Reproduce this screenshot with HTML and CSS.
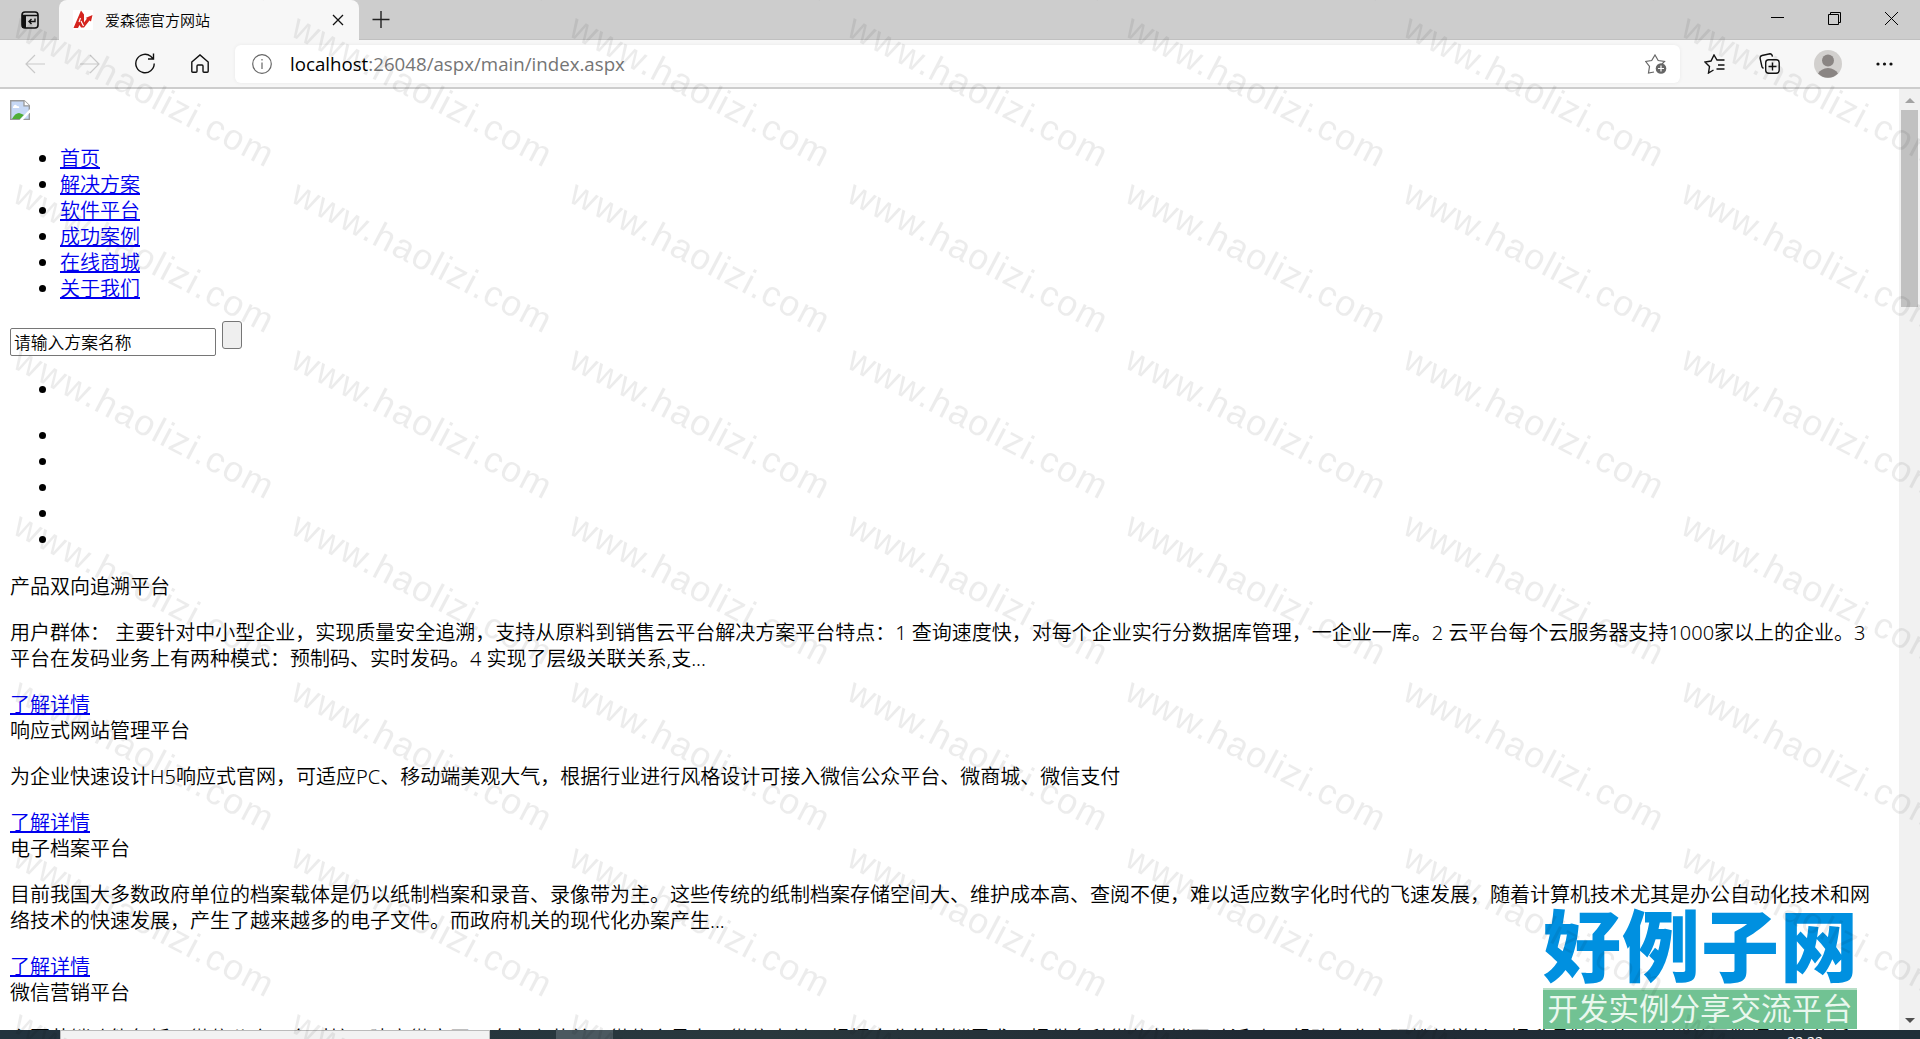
FILE: index.html
```html
<!DOCTYPE html>
<html lang="zh-CN">
<head>
    <meta charset="UTF-8">
    <title>爱森德官方网站</title>
    <link rel="stylesheet" href="styles.css">
</head>
<body>
    <div class="tab-bar">
        <div class="tab-menu">
            <svg width="18" height="18" viewBox="0 0 18 18" fill="none" stroke="#111" stroke-width="1.6">
                <rect x="1" y="1" width="16" height="16" rx="3"/>
                <path d="M1 4.500h16" stroke-width="1.500"/>
                <path d="M3 4V17" stroke-width="4"/>
                <path d="M14 7.500v3H8M10.500 8L8 10.500l2.500 2.500" stroke-width="1.400"/>
            </svg>
        </div>
        <div class="tab">
            <svg class="favicon" width="20" height="20" viewBox="0 0 20 20">
                <rect width="20" height="20" fill="#fff"/>
                <path d="M0.500 18L8 0.500l3 4v8l3-4-1.500-.5L19.500 5l-1.500 6.500-1.500-1-5.500 7H8L6.500 15 5 18z" fill="#d5251f"/>
                <path d="M7.500 8l-1.500 4M8 11l2.500 5" stroke="#fff" stroke-width="1.200" fill="none"/>
            </svg>
            <span class="tab-title">爱森德官方网站</span>
            <svg class="tab-close" width="12" height="12" viewBox="0 0 12 12" stroke="#111" stroke-width="1.3"><path d="M1 1l10 10M11 1L1 11"/></svg>
        </div>
        <svg class="tab-new" width="18" height="18" viewBox="0 0 18 18" stroke="#222" stroke-width="1.4"><path d="M9 1v17M0.500 9.500h17"/></svg>
        <div class="window-buttons">
            <svg width="13" height="13" viewBox="0 0 13 13" stroke="#000"><path d="M0 5.500h13"/></svg>
            <svg width="13" height="13" viewBox="0 0 13 13" stroke="#000" fill="none"><path d="M.5 2.500h10v10H.5zM2.500 2.500v-2h10v10h-2"/></svg>
            <svg width="13" height="13" viewBox="0 0 13 13" stroke="#000"><path d="M0 0l13 13M13 0L0 13"/></svg>
        </div>
    </div>

    <div class="toolbar">
        <div class="nav-buttons">
            <svg width="20" height="20" viewBox="0 0 20 20" fill="none" stroke="#c9c9c9" stroke-width="1.2"><path d="M20 10H1M10 1l-9 9 9 9"/></svg>
            <svg width="20" height="20" viewBox="0 0 20 20" fill="none" stroke="#c9c9c9" stroke-width="1.2"><path d="M0 10h19M10 1l9 9-9 9"/></svg>
            <svg width="20" height="21" viewBox="0 0 20 21" fill="none" stroke="#111" stroke-width="1.4"><path d="M19.200 10.500a9.200 9.200 0 1 1-3.500-7.200l2.500 2.500M18.500 .5v5.500h-5.500"/></svg>
            <svg class="home" width="18" height="19" viewBox="0 0 18 19" fill="none" stroke="#111" stroke-width="1.4"><path d="M.8 8L9 .9 17.200 8v9.200q0 1-1 1h-3.200q-1 0-1-1V12q0-1-1-1H7q-1 0-1 1v5.200q0 1-1 1H1.800q-1 0-1-1z"/></svg>
        </div>
        <div class="address">
            <svg class="info" width="20" height="20" viewBox="0 0 20 20" fill="none" stroke="#666" stroke-width="1.2"><circle cx="10" cy="10" r="9.300"/><path d="M10 8.500V15M10 5v1.600"/></svg>
            <span class="url">localhost<span class="url-path">:26048/aspx/main/index.aspx</span></span>
            <svg class="fav" width="22" height="20" viewBox="0 0 22 20" fill="none" stroke="#666" stroke-width="1.2">
                <path d="M9 18l-5.500 1 1-6.500L.7 7.500l6-1L10 1l3.200 5.500 6.300 1-2.500 2.500"/>
                <circle cx="16" cy="14.500" r="5.300" fill="#666" stroke="none"/>
                <path d="M16 11.500v6M13 14.500h6" stroke="#fff"/>
            </svg>
        </div>
        <div class="tools">
            <svg width="21" height="20" viewBox="0 0 21 20" fill="none" stroke="#111" stroke-width="1.4"><path d="M9.500 16L4.500 19l1-6.500L1 8l6-1 3-6 3 5h7.500M14 11h6.500M12.500 15h8"/></svg>
            <svg width="21" height="21" viewBox="0 0 21 21" fill="none" stroke="#111" stroke-width="1.400"><rect x="6.700" y="6.700" width="13.500" height="13.500" rx="3"/><path d="M13.500 9.500v8M9.500 13.500h8M4.500 15.500L3 14 1 5q0-2 2-2.500l8-1.800q2 0 2.500 3"/></svg>
            <svg class="avatar" width="28" height="28" viewBox="0 0 28 28"><circle cx="14" cy="14" r="14" fill="#d2d0ce"/><circle cx="14" cy="10.500" r="6" fill="#8a8583"/><path d="M4 23.500q3-5 10-5.500 7 .5 10 5.500a14 14 0 0 1-20 0z" fill="#8a8583"/></svg>
            <svg width="17" height="4" viewBox="0 0 17 4" fill="#111"><circle cx="2" cy="2" r="1.600"/><circle cx="8.500" cy="2" r="1.600"/><circle cx="15" cy="2" r="1.600"/></svg>
        </div>
    </div>

    <div class="viewport">
        <div class="page">
            <div class="logo">
                <svg width="20" height="20" viewBox="0 0 20 20">
                    <path d="M.7.700h13.500L19.300 5.500v14H.7z" fill="#c6d8f5" stroke="#999" stroke-width="1.400"/>
                    <path d="M14 .5v5.300h5.500" fill="#fff" stroke="#999" stroke-width="1.300"/>
                    <path d="M3 7q2-4 4-1 3 0 2 2H3z" fill="#fff"/>
                    <path d="M2 19q3-6 7-6 3 1 5 2l-4 4z" fill="#4fae37"/>
                    <path d="M9.500 20L20 9v3.500L13 20z" fill="#fff"/>
                </svg>
            </div>
            <ul class="menu">
                <li><a href="#">首页</a></li>
                <li><a href="#">解决方案</a></li>
                <li><a href="#">软件平台</a></li>
                <li><a href="#">成功案例</a></li>
                <li><a href="#">在线商城</a></li>
                <li><a href="#">关于我们</a></li>
            </ul>
            <div class="search">
                <input type="text" class="search-text" value="请输入方案名称">
                <button class="search-button"></button>
            </div>
            <ul>
                <li></li>
            </ul>
            <ul class="banner-list">
                <li></li>
                <li></li>
                <li></li>
                <li></li>
                <li></li>
            </ul>
            <div>产品双向追溯平台</div>
            <p>用户群体： 主要针对中小型企业，实现质量安全追溯，支持从原料到销售云平台解决方案平台特点：1 查询速度快，对每个企业实行分数据库管理，一企业一库。2 云平台每个云服务器支持1000家以上的企业。3<br>平台在发码业务上有两种模式：预制码、实时发码。4 实现了层级关联关系,支...</p>
            <a href="#">了解详情</a>
            <div>响应式网站管理平台</div>
            <p>为企业快速设计H5响应式官网，可适应PC、移动端美观大气，根据行业进行风格设计可接入微信公众平台、微商城、微信支付</p>
            <a href="#">了解详情</a>
            <div>电子档案平台</div>
            <p>目前我国大多数政府单位的档案载体是仍以纸制档案和录音、录像带为主。这些传统的纸制档案存储空间大、维护成本高、查阅不便，难以适应数字化时代的飞速发展，随着计算机技术尤其是办公自动化技术和网<br>络技术的快速发展，产生了越来越多的电子文件。而政府机关的现代化办案产生...</p>
            <a href="#">了解详情</a>
            <div>微信营销平台</div>
            <p>主要营销功能包括：微信公众平台对接，建立微官网、自定义菜单、微信会员卡、微信支付，根据企业的营销需求，提供多种微信营销互动活动，帮助企业实现粉丝增长，提升品牌价值，营销效果数据统计分析</p>
        </div>
        <div class="scrollbar">
            <div class="arrow-up"></div>
            <div class="thumb"></div>
            <div class="arrow-down"></div>
        </div>
    </div>

    <div class="taskbar">
        <div class="task-search"></div>
        <div class="task-active"></div>
        <div class="clock">22:22</div>
    </div>

    <div class="site-mark">
        <div class="mark-name">好例子网</div>
        <div class="mark-slogan">开发实例分享交流平台</div>
    </div>

    <svg class="watermark" width="1920" height="1039">
        <defs>
            <pattern id="mark" x="5" y="6" width="278" height="166" patternUnits="userSpaceOnUse">
                <text class="watermark-text" transform="translate(6 29) rotate(27.500)" textLength="287">www.haolizi.com</text>
            </pattern>
        </defs>
        <rect width="1920" height="1039" fill="url(#mark)"/>
    </svg>
</body>
</html>
```

FILE: styles.css
```css
* {
    box-sizing: border-box;
}
body {
    margin: 0;
    height: 1039px;
    display: flex;
    flex-direction: column;
    overflow: hidden;
    background-color: white;
    font-family: "Noto Sans", "Noto Sans CJK SC", sans-serif;
    font-size: 20px;
    line-height: 26px;
    color: #000;
}
svg {
    display: block;
    flex-shrink: 0;
}
.tab-bar {
    display: flex;
    height: 40px;
    flex-shrink: 0;
    background-color: #cdcdcd;
    border-bottom: 1px solid #c0c0c0;
}
.tab-menu {
    width: 59px;
    padding: 11px 0 0 21px;
    flex-shrink: 0;
}
.tab {
    display: flex;
    align-items: center;
    width: 300px;
    height: 40px;
    padding: 0 15px 0 14px;
    background-color: #f7f7f7;
    border-radius: 8px 8px 0 0;
}
.tab-title {
    flex: 1;
    margin-left: 12px;
    font-size: 15px;
    font-weight: 350;
}
.tab-new {
    margin: 10px 0 0 13px;
}
.window-buttons {
    display: flex;
    gap: 44px;
    margin-left: auto;
    padding: 12px 22px 0 0;
}
.toolbar {
    display: flex;
    align-items: center;
    height: 49px;
    flex-shrink: 0;
    background-color: #f7f7f7;
    border-bottom: 2px solid #cdcdcd;
}
.nav-buttons {
    display: flex;
    align-items: center;
    gap: 35px;
    width: 235px;
    padding-left: 25px;
}
.home {
    margin-left: 1px;
}
.address {
    display: flex;
    align-items: center;
    width: 1445px;
    height: 38px;
    padding: 0 13px 0 17px;
    background-color: white;
    border-radius: 6px;
    box-shadow: 0 0 4px rgba(0, 0, 0, 0.06);
}
.url {
    flex: 1;
    margin-left: 18px;
    font-family: "Open Sans", sans-serif;
    font-size: 18.7px;
}
.url-path {
    color: #757575;
}
.tools {
    display: flex;
    align-items: center;
    gap: 34px;
    padding-left: 24px;
}
.viewport {
    display: flex;
    height: 941px;
    flex-shrink: 0;
    overflow: hidden;
}
.page {
    width: 1899px;
    padding: 12px 10px 0;
    white-space: nowrap;
    overflow: hidden;
    font-weight: 350;
}
.logo {
    height: 26px;
    margin-top: -2px;
    padding-top: 1px;
}
ul {
    margin: 20px 0;
    padding-left: 50px;
}
.menu {
    margin: 21px 0 19px;
}
.banner-list {
    margin-bottom: 21px;
}
li {
    height: 26px;
}
p {
    margin: 20px 0;
}
a {
    color: #0000ee;
}
.search {
    display: flex;
    gap: 6px;
    height: 36px;
}
.search-text {
    width: 206px;
    height: 28px;
    margin-top: 7px;
    padding: 1px 4px 1px 3px;
    border: 1px solid #767676;
    border-radius: 2px;
    font-family: inherit;
    font-size: 16.8px;
    font-weight: 350;
}
.search-button {
    width: 20px;
    height: 28px;
    border: 1px solid #767676;
    border-radius: 3px;
    background-color: #efefef;
}
.scrollbar {
    display: flex;
    flex-direction: column;
    align-items: center;
    width: 21px;
    background-color: #f1f1f1;
}
.arrow-up {
    margin: 9px 0 7px;
    border: 5px solid transparent;
    border-top: 0;
    border-bottom-color: #a3a3a3;
}
.thumb {
    width: 17px;
    height: 197px;
    background-color: #c1c1c1;
}
.arrow-down {
    margin: auto 0 7px;
    border: 5px solid transparent;
    border-bottom: 0;
    border-top-color: #505050;
}
.taskbar {
    display: flex;
    height: 9px;
    flex-shrink: 0;
    overflow: hidden;
    background: linear-gradient(90deg, #22333e, #29383d 40%, #202a34 65%, #1f2f38);
}
.task-search {
    width: 430px;
    margin-left: 60px;
    background-color: #f2f2f2;
    border: 1px solid #bbb;
    border-bottom: 0;
}
.task-active {
    width: 57px;
    margin-left: 66px;
    background-color: #4b5960;
}
.clock {
    margin: 3px 97px 0 auto;
    font-size: 14px;
    line-height: 18px;
    color: white;
}
/* site badge, over the page in the lower right corner */
.site-mark {
    position: absolute;
    left: 1543px;
    top: 905px;
    width: 314px;
}
.mark-name {
    height: 83px;
    font-family: "Noto Sans CJK SC", sans-serif;
    font-size: 78px;
    font-weight: 900;
    letter-spacing: 1px;
    line-height: 74px;
    white-space: nowrap;
    color: #0090e0;
}
.mark-slogan {
    height: 41px;
    background-color: #71c293;
    border-top: 2px solid #b9dfc8;
    font-family: "Noto Sans CJK SC", sans-serif;
    font-size: 30.5px;
    line-height: 35px;
    text-align: center;
    white-space: nowrap;
    color: #eaf7ee;
}
.watermark {
    position: absolute;
    left: 0;
    top: 0;
    pointer-events: none;
}
.watermark-text {
    font-family: "Liberation Sans", Arial, sans-serif;
    font-size: 36px;
    fill: rgba(0, 0, 0, 0.075);
}
```
